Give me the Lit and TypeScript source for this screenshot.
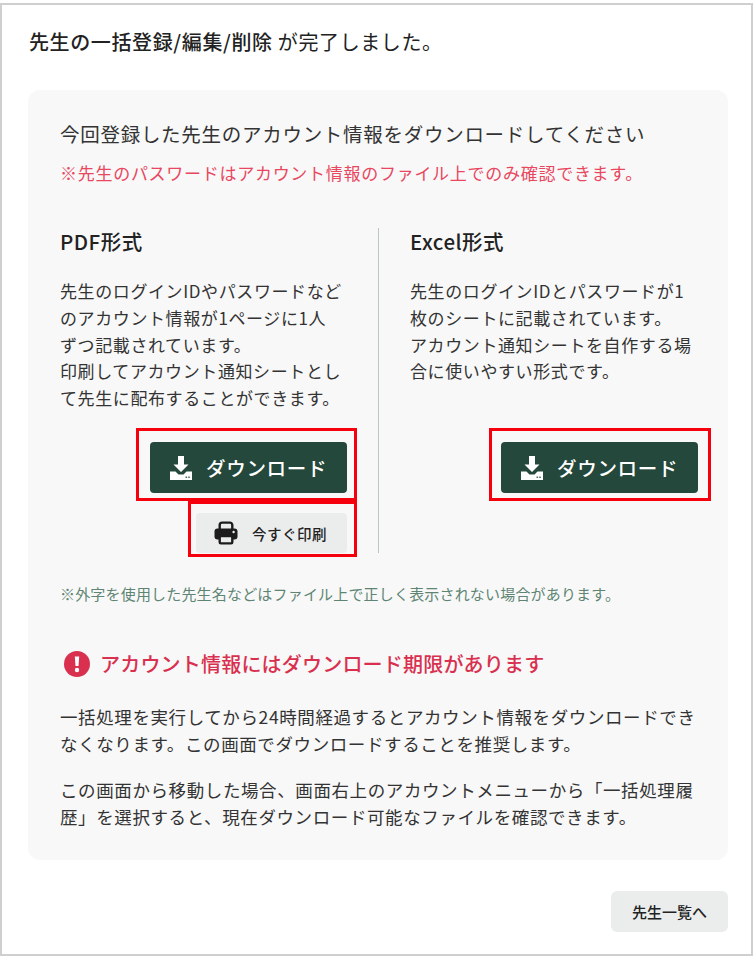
import { LitElement, html, css, svg } from "lit";
import { customElement } from "lit/decorators.js";

const dl = svg`<path d="M9 1h6v8.5h4.5L12 17 4.5 9.5H9z" fill="#fff"/><path d="M1 16.5h5.5l3 3h5l3-3H23V25H1z" fill="#fff"/><rect x="16.5" y="21.6" width="1.6" height="1.2" fill="#24483b"/><rect x="19.2" y="21.6" width="1.6" height="1.2" fill="#24483b"/>`;

const printer = svg`<path d="M5.7 9V4a2.4 2.4 0 0 1 2.4-2.4h7.8A2.4 2.4 0 0 1 18.3 4v5" fill="none" stroke="#1c1c1c" stroke-width="2.4"/><rect x="0.5" y="7.5" width="23" height="11" rx="3" fill="#1c1c1c"/><rect x="5.7" y="15" width="12.6" height="7.4" rx="1.2" fill="#ebeded" stroke="#1c1c1c" stroke-width="2.4"/><circle cx="19.6" cy="11" r="1.2" fill="#ebeded"/>`;

@customElement("app-root")
export class AppRoot extends LitElement {
  static styles = css`
    :host {
      display: block;
      width: 756px;
      height: 959px;
      box-sizing: border-box;
      padding: 3px 3px 3px 0;
      font-family: "Noto Sans CJK JP", "Noto Sans", sans-serif;
      color: #333;
      background: #fff;
    }
    .frame {
      box-sizing: border-box;
      height: 100%;
      border: 2px solid #cfcfcf;
      padding: 23px 26px 0 26px;
      display: flex;
      flex-direction: column;
    }
    .head {
      margin: 0;
      padding-left: 1px;
      font-size: 20px;
      line-height: 28px;
      height: 28px;
      color: #222;
      letter-spacing: 0.62px;
      font-weight: 400;
      white-space: nowrap;
    }
    .head b { font-weight: 500; }
    .panel {
      margin-top: 34px;
      height: 770px;
      box-sizing: border-box;
      width: 700px;
      background: #f8f8f8;
      border-radius: 12px;
      padding: 28px 32px 0;
    }
    .lead {
      font-size: 19.5px;
      line-height: 32px;
      letter-spacing: 0.72px;
      white-space: nowrap;
    }
    .alert {
      margin-top: 10px;
      font-size: 17px;
      line-height: 26px;
      letter-spacing: 0.72px;
      color: #e8475f;
      white-space: nowrap;
    }
    .cols {
      margin-top: 42px;
      display: grid;
      grid-template-columns: 319px 1fr;
    }
    .col { padding-left: 31px; min-width: 0; }
    .col:first-child { padding-left: 0; padding-right: 31px; border-right: 1px solid #b9c8c2; }
    .col h3 {
      margin: 0;
      font-size: 20.5px;
      font-weight: 500;
      line-height: 26px;
      letter-spacing: 0.5px;
      color: #222;
    }
    .desc {
      margin: 24px 0 0;
      font-size: 17px;
      line-height: 26.8px;
      letter-spacing: 0.6px;
      white-space: nowrap;
      height: 134px;
    }
    .mark {
      box-sizing: border-box;
      border: 3px solid #f5000c;
      margin-right: -10px;
      display: flex;
      justify-content: flex-end;
      padding-right: 7px;
    }
    .mark.a { margin-top: 16px; height: 73px; margin-left: 76px; padding-top: 11px; }
    .mark.b { margin-left: 128px; height: 56px; padding-top: 9px; margin-bottom: -4px; }
    .col.r .mark.a { margin-left: 79px; margin-right: -15px; padding-right: 10px; }
    .btn {
      border: 0;
      display: flex;
      align-items: center;
      font-family: inherit;
      border-radius: 4px;
      padding: 0;
    }
    .dark {
      width: 197px;
      height: 51px;
      background: #24483b;
      color: #fff;
      font-size: 19.5px;
      font-weight: 500;
      letter-spacing: 0.7px;
      padding-left: 19px;
      gap: 13px;
      box-sizing: border-box;
      flex: none;
    }
    .dark svg { width: 24px; height: 26px; }
    .gray {
      width: 151px;
      height: 40px;
      background: #ebeded;
      color: #222;
      font-size: 14.5px;
      font-weight: 500;
      letter-spacing: 0.5px;
      padding-left: 18px;
      gap: 14px;
      box-sizing: border-box;
      flex: none;
    }
    .gray svg { width: 24px; height: 24px; }
    .note {
      margin-top: 29px;
      font-size: 15px;
      line-height: 24px;
      letter-spacing: 0.18px;
      color: #5e8573;
      white-space: nowrap;
    }
    .warn {
      margin-top: 43px;
      display: flex;
      align-items: center;
      gap: 10px;
      font-size: 20px;
      line-height: 30px;
      font-weight: 500;
      letter-spacing: 0.2px;
      color: #d9304f;
      white-space: nowrap;
    }
    .warn svg { width: 26px; height: 26px; flex: none; margin-left: 4px; }
    .para {
      margin: 0;
      font-size: 17.5px;
      line-height: 27px;
      letter-spacing: 0.6px;
      white-space: nowrap;
    }
    .warn + .para { margin-top: 24px; }
    .para + .para { margin-top: 19px; }
    .foot {
      display: flex;
      justify-content: flex-end;
      margin-top: 31px;
      width: 700px;
    }
    .next {
      width: 117px;
      height: 41px;
      background: #ebeded;
      border-radius: 6px;
      justify-content: center;
      font-size: 15px;
      font-weight: 500;
      color: #222;
    }
  `;

  private dlBtn() {
    return html`<button class="btn dark"><svg viewBox="0 0 24 26">${dl}</svg>ダウンロード</button>`;
  }

  render() {
    return html`<div class="frame">
      <h1 class="head"><b>先生の一括登録/編集/削除</b> が完了しました。</h1>
      <section class="panel">
        <div class="lead">今回登録した先生のアカウント情報をダウンロードしてください</div>
        <div class="alert">※先生のパスワードはアカウント情報のファイル上でのみ確認できます。</div>
        <div class="cols">
          <div class="col">
            <h3>PDF形式</h3>
            <p class="desc">先生のログインIDやパスワードなど<br />のアカウント情報が1ページに1人<br />ずつ記載されています。<br />印刷してアカウント通知シートとし<br />て先生に配布することができます。</p>
            <div class="mark a">${this.dlBtn()}</div>
            <div class="mark b">
              <button class="btn gray"><svg viewBox="0 0 24 24">${printer}</svg>今すぐ印刷</button>
            </div>
          </div>
          <div class="col r">
            <h3>Excel形式</h3>
            <p class="desc">先生のログインIDとパスワードが1<br />枚のシートに記載されています。<br />アカウント通知シートを自作する場<br />合に使いやすい形式です。</p>
            <div class="mark a">${this.dlBtn()}</div>
          </div>
        </div>
        <div class="note">※外字を使用した先生名などはファイル上で正しく表示されない場合があります。</div>
        <div class="warn">
          <svg viewBox="0 0 26 26"><circle cx="13" cy="13" r="13" fill="#d9304f"/><path d="M10.8 5.5h4.4l-.7 9.5h-3z" fill="#fff"/><circle cx="13" cy="19" r="2.2" fill="#fff"/></svg>
          アカウント情報にはダウンロード期限があります
        </div>
        <p class="para">一括処理を実行してから24時間経過するとアカウント情報をダウンロードでき<br />なくなります。この画面でダウンロードすることを推奨します。</p>
        <p class="para">この画面から移動した場合、画面右上のアカウントメニューから「一括処理履<br />歴」を選択すると、現在ダウンロード可能なファイルを確認できます。</p>
      </section>
      <div class="foot"><button class="btn next">先生一覧へ</button></div>
    </div>`;
  }
}
